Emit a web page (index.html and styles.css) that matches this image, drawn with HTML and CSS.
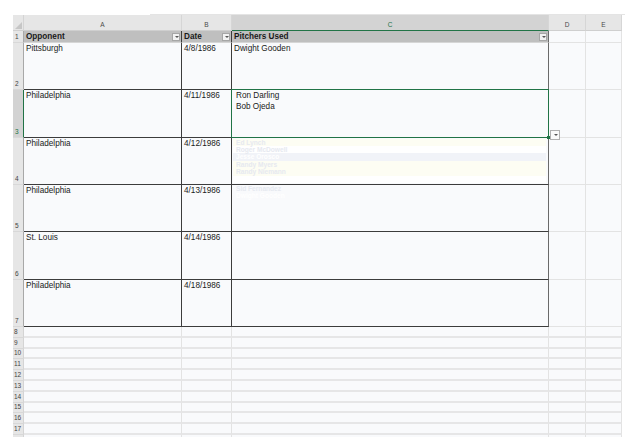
FILE: index.html
```html
<!DOCTYPE html>
<html>
<head>
<meta charset="utf-8">
<link rel="stylesheet" href="styles.css">
</head>
<body>
<div class="topline"></div>
<div class="sheet">
  <div class="corner"><span class="tri"></span></div>
  <div class="colhead">A</div>
  <div class="colhead">B</div>
  <div class="colhead sel">C</div>
  <div class="colhead">D</div>
  <div class="colhead">E</div>

  <div class="rowhead r1">1</div>
  <div class="th">Opponent<span class="dd"></span></div>
  <div class="th">Date<span class="dd"></span></div>
  <div class="th last">Pitchers Used<span class="dd"></span></div>
  <div class="cell"></div>
  <div class="cell"></div>

  <div class="rowhead big">2</div>
  <div class="td">Pittsburgh</div>
  <div class="td">4/8/1986</div>
  <div class="td last">Dwight Gooden</div>
  <div class="cell"></div>
  <div class="cell"></div>

  <div class="rowhead big sel">3</div>
  <div class="td">Philadelphia</div>
  <div class="td">4/11/1986</div>
  <div class="td last active">
    <div class="ctext">Ron Darling<br>Bob Ojeda</div>
    <span class="handle"></span>
    <span class="dd side"></span>
  </div>
  <div class="cell"></div>
  <div class="cell"></div>

  <div class="rowhead big">4</div>
  <div class="td">Philadelphia</div>
  <div class="td">4/12/1986</div>
  <div class="td last ghosted">
    <div class="ghost">
      <div class="gi y">Ed Lynch</div>
      <div class="gi w">Roger McDowell</div>
      <div class="gi b">Jesse Orosco</div>
      <div class="gi y">Randy Myers</div>
      <div class="gi y">Randy Niemann</div>
      <div class="gi w"></div>
    </div>
  </div>
  <div class="cell"></div>
  <div class="cell"></div>

  <div class="rowhead big">5</div>
  <div class="td">Philadelphia</div>
  <div class="td">4/13/1986</div>
  <div class="td last ghosted">
    <div class="ghost g2">
      <div class="gi">Sid Fernandez</div>
      <div class="gi wt">Dwight Gooden</div>
    </div>
  </div>
  <div class="cell"></div>
  <div class="cell"></div>

  <div class="rowhead big">6</div>
  <div class="td">St. Louis</div>
  <div class="td">4/14/1986</div>
  <div class="td last"></div>
  <div class="cell"></div>
  <div class="cell"></div>

  <div class="rowhead big">7</div>
  <div class="td">Philadelphia</div>
  <div class="td">4/18/1986</div>
  <div class="td last"></div>
  <div class="cell"></div>
  <div class="cell"></div>

  <div class="rowhead sm">8</div><div class="cell sm"></div><div class="cell sm"></div><div class="cell sm"></div><div class="cell sm"></div><div class="cell sm"></div>
  <div class="rowhead sm">9</div><div class="cell sm"></div><div class="cell sm"></div><div class="cell sm"></div><div class="cell sm"></div><div class="cell sm"></div>
  <div class="rowhead sm">10</div><div class="cell sm"></div><div class="cell sm"></div><div class="cell sm"></div><div class="cell sm"></div><div class="cell sm"></div>
  <div class="rowhead sm">11</div><div class="cell sm"></div><div class="cell sm"></div><div class="cell sm"></div><div class="cell sm"></div><div class="cell sm"></div>
  <div class="rowhead sm">12</div><div class="cell sm"></div><div class="cell sm"></div><div class="cell sm"></div><div class="cell sm"></div><div class="cell sm"></div>
  <div class="rowhead sm">13</div><div class="cell sm"></div><div class="cell sm"></div><div class="cell sm"></div><div class="cell sm"></div><div class="cell sm"></div>
  <div class="rowhead sm">14</div><div class="cell sm"></div><div class="cell sm"></div><div class="cell sm"></div><div class="cell sm"></div><div class="cell sm"></div>
  <div class="rowhead sm">15</div><div class="cell sm"></div><div class="cell sm"></div><div class="cell sm"></div><div class="cell sm"></div><div class="cell sm"></div>
  <div class="rowhead sm">16</div><div class="cell sm"></div><div class="cell sm"></div><div class="cell sm"></div><div class="cell sm"></div><div class="cell sm"></div>
  <div class="rowhead sm">17</div><div class="cell sm"></div><div class="cell sm"></div><div class="cell sm"></div><div class="cell sm"></div><div class="cell sm"></div>
  <div class="rowhead sm"></div><div class="cell sm"></div><div class="cell sm"></div><div class="cell sm"></div><div class="cell sm"></div><div class="cell sm"></div>
</div>
</body>
</html>
```

FILE: styles.css
```css
* { box-sizing: border-box; }
html, body { margin: 0; padding: 0; background: #ffffff; }
body {
  width: 625px;
  height: 448px;
  overflow: hidden;
  position: relative;
  font-family: "Liberation Sans", Arial, sans-serif;
  color: #1a1a1a;
}
.topline {
  height: 1px;
  margin: 14px 0 0 150px;
  background: #e4e4e4;
}
.sheet {
  margin-left: 13px;
  width: 609px;
  height: 422px;
  overflow: hidden;
  display: grid;
  grid-template-columns: 11px 158px 50px 317px 37px 36px;
  grid-template-rows: 16px 12px repeat(6, 47.33px) repeat(11, 10.8px);
  background: #f9fafc;
}
.corner {
  background: #e6e6e6;
  border-right: 1px solid #d4d4d4;
  border-bottom: 1px solid #cfcfcf;
  position: relative;
}
.tri {
  position: absolute;
  right: 1px;
  bottom: 1px;
  width: 0;
  height: 0;
  border-left: 7px solid transparent;
  border-bottom: 7px solid #c6c6c6;
}
.colhead {
  background: #e6e6e6;
  border-right: 1px solid #d6d6d6;
  border-bottom: 1px solid #cfcfcf;
  font-size: 6.5px;
  color: #4a4a4a;
  display: flex;
  align-items: center;
  justify-content: center;
  padding-top: 3px;
}
.colhead.sel {
  background: #d3d3d3;
  color: #217346;
  border-bottom: 1px solid #217346;
}
.rowhead {
  background: #e6e6e6;
  border-right: 1px solid #a8a8a8;
  border-bottom: 1px solid #d8d8d8;
  font-size: 6.5px;
  color: #444;
  display: flex;
  align-items: flex-end;
  padding-left: 1px;
  line-height: 8px;
}
.rowhead.r1 { align-items: center; padding-left: 2px; }
.rowhead.big { padding-left: 2px; padding-bottom: 1px; }
.rowhead.sm { border-right: 1px solid #d4d4d4; align-items: center; }
.rowhead.sel {
  background: #d3d3d3;
  color: #217346;
  border-right: 1px solid #217346;
}
.cell {
  border-right: 1px solid #e3e3e3;
  border-bottom: 1px solid #e3e3e3;
}
.cell.sm { border-bottom: 2px solid #e6e6e7; }
.th {
  background: #bfbfbf;
  font-weight: bold;
  font-size: 8.2px;
  line-height: 11px;
  padding-left: 2px;
  border-right: 1px solid #3c3c3c;
  border-bottom: 1px solid #d6d6d6;
  position: relative;
}
.th.last { border-right: 1px solid #6a6a6a; }
.dd {
  position: absolute;
  right: 1px;
  top: 2px;
  width: 8px;
  height: 8px;
  background: #f2f2f2;
  border: 1px solid #a6a6a6;
}
.dd::after {
  content: "";
  position: absolute;
  left: 1.5px;
  top: 2px;
  border-left: 2px solid transparent;
  border-right: 2px solid transparent;
  border-top: 2px solid #555;
}
.td {
  font-size: 8.2px;
  line-height: 11px;
  padding-left: 2px;
  border-right: 1px solid #3c3c3c;
  border-bottom: 1px solid #3c3c3c;
  position: relative;
}
.td.last { border-right: 1px solid #6a6a6a; }
.active::after {
  content: "";
  position: absolute;
  left: -1px;
  top: -1px;
  right: -1px;
  bottom: -1px;
  border: 1px solid #217346;
  pointer-events: none;
}
.ctext { padding-left: 2px; }
.handle {
  position: absolute;
  right: -2px;
  bottom: -2px;
  width: 3px;
  height: 3px;
  background: #217346;
  z-index: 2;
}
.dd.side {
  top: auto;
  right: -12px;
  bottom: -3px;
  width: 10px;
  height: 10px;
  background: #fafafa;
  border-color: #b0b0b0;
}
.dd.side::after { left: 2.5px; top: 3px; }
.ghosted { overflow: visible; }
.ghost {
  position: absolute;
  left: 1px;
  right: 2px;
  top: 1px;
  font-size: 6.6px;
  font-weight: bold;
  color: #e6e9f0;
}
.ghost.g2 { top: 0; }
.gi {
  height: 7.4px;
  line-height: 7.4px;
  padding-left: 3px;
}
.gi.y { background: #fdfdf3; }
.gi.w { background: #ffffff; }
.gi.b { background: #f1f3f8; color: #ffffff; }
.gi.wt { color: #ffffff; }
```
